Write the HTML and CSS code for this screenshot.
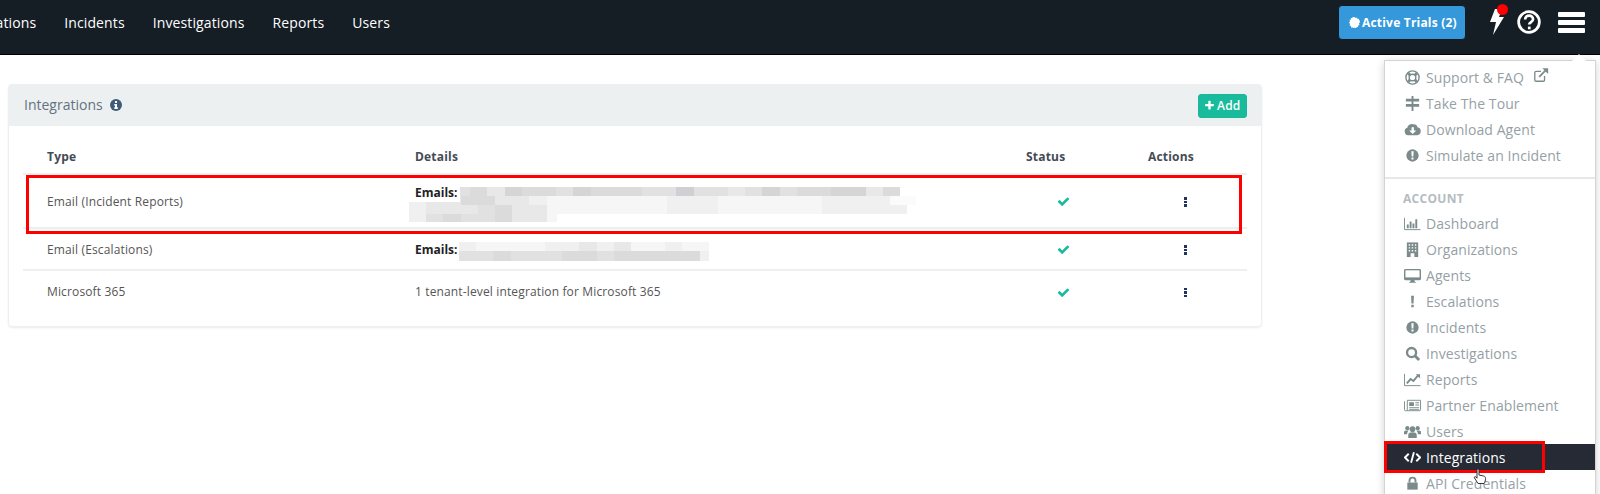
FILE: index.html
```html
<!DOCTYPE html>
<html lang="en">
<head>
<meta charset="utf-8">
<title>Integrations</title>
<link rel="stylesheet" href="styles.css">
</head>
<body>
<header class="navbar">
  <nav class="nav-links">
    <a>Organizations</a><a>Incidents</a><a>Investigations</a><a>Reports</a><a>Users</a>
  </nav>
  <div class="nav-tools">
    <button class="trial-btn">
      <svg class="badge-ic" viewBox="0 0 20 20"><path d="M10 0l2 2 2.600-1.200 1 2.700 2.800-.2-.2 2.800 2.700 1L19 9.700l1 .3-2 2 1.200 2.600-2.700 1 .2 2.800-2.800-.2-1 2.700L10 19.500 8 20 6.400 19 3.600 19l.2-2.700-2.800-1L2 12.600 0 10l2-2L.8 5.400l2.700-1-.2-2.800 2.800.2 1-2.700L10 0z"/></svg>
      Active Trials (2)
    </button>
    <span class="bolt">
      <svg viewBox="0 0 16 28" class="bolt-ic"><path d="M7 1h7l-3 8h5L5 27l3-13H2z"/></svg>
      <i class="dot"></i>
    </span>
    <svg class="help-ic" viewBox="0 0 22 22"><circle cx="11" cy="11" r="9.500"/><path d="M7.500 8.600c0-4.600 7.200-4.600 7.200-.2 0 2.800-3.500 2.600-3.500 5"/><path class="help-dot" d="M10 15.200h2.500v2.500H10z"/></svg>
    <span class="burger"><i></i><i></i><i></i></span>
  </div>
</header>

<main class="page">
  <section class="card">
    <div class="card-head">
      <h2>Integrations
        <svg class="info-ic" viewBox="0 0 12 12"><circle cx="6" cy="6" r="6"/><path class="cut" d="M5 2h2v2H5zM4.300 5h2.700v3.200h.8V10H4.300V8.200H5V6.500h-.7z"/></svg>
      </h2>
      <button class="add-btn"><svg viewBox="0 0 1792 1792"><path d="M1600 736v192q0 40-28 68t-68 28h-416v416q0 40-28 68t-68 28h-192q-40 0-68-28t-28-68v-416h-416q-40 0-68-28t-28-68v-192q0-40 28-68t68-28h416v-416q0-40 28-68t68-28h192q40 0 68 28t28 68v416h416q40 0 68 28t28 68z"/></svg>Add</button>
    </div>
    <div class="card-body">
      <table>
        <colgroup><col class="c1"><col class="c2"><col class="c3"><col class="c4"></colgroup>
        <thead><tr><th>Type</th><th>Details</th><th>Status</th><th>Actions</th></tr></thead>
        <tbody>
          <tr class="tall">
            <td>Email (Incident Reports)</td>
            <td>
              <div class="emails two-line"><b>Emails:</b>
                <div class="blur blur-a">
                  <div class="strip s-a"><i class="g4"></i><i class="g5"></i><i class="g3"></i><i class="g6"></i><i class="g5"></i><i class="g5"></i><i class="g4"></i><i class="g6"></i><i class="g5"></i><i class="g5"></i><i class="g5"></i><i class="g4"></i><i class="g4"></i><i class="g7"></i><i class="g4"></i><i class="g4"></i><i class="g3"></i><i class="g4"></i><i class="g6"></i><i class="g4"></i><i class="g5"></i><i class="g5"></i><i class="g6"></i><i class="g6"></i><i class="g3"></i><i class="g5"></i></div>
                  <div class="strip s-b"><i class="g2"></i><i class="g3"></i><i class="g3"></i><i class="g5"></i><i class="g5"></i><i class="g3"></i><i class="g3"></i><i class="g2"></i><i class="g1"></i><i class="g1"></i><i class="g1"></i><i class="g1"></i><i class="g1"></i><i class="g1"></i><i class="g1"></i><i class="g2"></i><i class="g2"></i><i class="g2"></i><i class="g1"></i><i class="g1"></i><i class="g1"></i><i class="g1"></i><i class="g1"></i><i class="g1"></i><i class="g2"></i><i class="g2"></i><i class="g2"></i><i class="g2"></i><i class="g0"></i><i class="g0"></i></div>
                  <div class="strip s-c"><i class="g2"></i><i class="g3"></i><i class="g3"></i><i class="g3"></i><i class="g4"></i><i class="g5"></i><i class="g3"></i><i class="g3"></i><i class="g1"></i><i class="g1"></i><i class="g1"></i><i class="g1"></i><i class="g1"></i><i class="g1"></i><i class="g1"></i><i class="g2"></i><i class="g2"></i><i class="g2"></i><i class="g1"></i><i class="g1"></i><i class="g1"></i><i class="g1"></i><i class="g1"></i><i class="g1"></i><i class="g2"></i><i class="g2"></i><i class="g2"></i><i class="g2"></i><i class="g2"></i></div>
                  <div class="strip s-d"><i class="g2"></i><i class="g4"></i><i class="g5"></i><i class="g4"></i><i class="g4"></i><i class="g5"></i><i class="g3"></i><i class="g3"></i><i class="g1"></i></div>
                </div>
              </div>
            </td>
            <td class="mid"><svg class="check" viewBox="0 0 1792 1792"><path d="M1671 566q0 40-28 68l-724 724-136 136q-28 28-68 28t-68-28l-136-136-362-362q-28-28-28-68t28-68l136-136q28-28 68-28t68 28l294 295 656-657q28-28 68-28t68 28l136 136q28 28 28 68z"/></svg></td>
            <td class="mid"><span class="kebab"><i></i><i></i><i></i></span></td>
          </tr>
          <tr>
            <td>Email (Escalations)</td>
            <td>
              <div class="emails"><b>Emails:</b>
                <div class="blur blur-b">
                  <div class="strip s-e"><i class="g2"></i><i class="g1"></i><i class="g1"></i><i class="g1"></i><i class="g1"></i><i class="g2"></i><i class="g2"></i><i class="g3"></i><i class="g2"></i><i class="g3"></i><i class="g1"></i><i class="g1"></i><i class="g2"></i><i class="g1"></i><i class="g1"></i></div>
                  <div class="strip s-f"><i class="g4"></i><i class="g4"></i><i class="g5"></i><i class="g4"></i><i class="g4"></i><i class="g4"></i><i class="g5"></i><i class="g5"></i><i class="g4"></i><i class="g5"></i><i class="g5"></i><i class="g5"></i><i class="g5"></i><i class="g5"></i><i class="g2"></i></div>
                </div>
              </div>
            </td>
            <td class="mid"><svg class="check" viewBox="0 0 1792 1792"><path d="M1671 566q0 40-28 68l-724 724-136 136q-28 28-68 28t-68-28l-136-136-362-362q-28-28-28-68t28-68l136-136q28-28 68-28t68 28l294 295 656-657q28-28 68-28t68 28l136 136q28 28 28 68z"/></svg></td>
            <td class="mid"><span class="kebab"><i></i><i></i><i></i></span></td>
          </tr>
          <tr class="last">
            <td>Microsoft 365</td>
            <td>1 tenant-level integration for Microsoft 365</td>
            <td class="mid"><svg class="check" viewBox="0 0 1792 1792"><path d="M1671 566q0 40-28 68l-724 724-136 136q-28 28-68 28t-68-28l-136-136-362-362q-28-28-28-68t28-68l136-136q28-28 68-28t68 28l294 295 656-657q28-28 68-28t68 28l136 136q28 28 28 68z"/></svg></td>
            <td class="mid"><span class="kebab"><i></i><i></i><i></i></span></td>
          </tr>
        </tbody>
      </table>
    </div>
  </section>
</main>

<aside class="menu">
  <span class="menu-caret"></span>
  <ul class="menu-group first">
    <li><svg class="ic" viewBox="0 0 18 18"><circle cx="9" cy="9" r="7" class="st15"/><circle cx="9" cy="9" r="3.500" class="st15"/><path class="st3" d="M4.500 4.500l2 2M13.500 4.500l-2 2M4.500 13.500l2-2M13.500 13.500l-2-2"/></svg>Support &amp; FAQ<svg class="ic ext" viewBox="0 0 18 18"><path class="st15" d="M13 10v4.500a1.500 1.500 0 0 1-1.500 1.500h-8A1.500 1.500 0 0 1 2 14.500v-8A1.500 1.500 0 0 1 3.500 5H9"/><path class="st2" d="M7 11L15 3"/><path d="M10.500 1.500H17V8z"/></svg></li>
    <li><svg class="ic" viewBox="0 0 18 18"><path d="M8 1h2v16H8zM2 4h14v3H2zM2 9.500h14v3H2z"/></svg>Take The Tour</li>
    <li><svg class="ic" viewBox="0 0 18 18"><path d="M4.500 15A4 4 0 0 1 3.500 7.200 4.500 4.500 0 0 1 9.500 3.500a4 4 0 0 1 4.800 3.200A4.200 4.200 0 0 1 14 15z"/><path class="cut" d="M8 6.500h2.500v3.500H13l-3.800 3.800L5.500 10H8z"/></svg>Download Agent</li>
    <li><svg class="ic" viewBox="0 0 18 18"><circle cx="9" cy="9" r="6.500"/><path class="cut" d="M7.800 4.500h2.400l-.3 5.500H8.100zM7.900 11h2.200v2.200H7.900z"/></svg>Simulate an Incident</li>
  </ul>
  <ul class="menu-group">
    <li class="menu-label">ACCOUNT</li>
    <li><svg class="ic" viewBox="0 0 18 18"><path class="st1" d="M.5 3v12.500H17.500"/><path d="M3 10h2v4H3zM6 7h2v7H6zM9 9h2v5H9zM12 4.500h2V14h-2z"/></svg>Dashboard</li>
    <li><svg class="ic" viewBox="0 0 18 18"><path d="M3 1.500h12V17H3z"/><path class="cut" d="M5 3.500h1.500V5H5zM8.200 3.500h1.500V5H8.200zM11.500 3.500H13V5h-1.500zM5 6.500h1.500V8H5zM8.200 6.500h1.500V8H8.200zM11.500 6.500H13V8h-1.500zM5 9.500h1.500V11H5zM8.200 9.500h1.500V11H8.200zM11.500 9.500H13V11h-1.500zM7 13h4v4H7z"/></svg>Organizations</li>
    <li><svg class="ic" viewBox="0 0 18 18"><path d="M1.500 2h15A1.500 1.500 0 0 1 18 3.500v9a1.500 1.500 0 0 1-1.500 1.500H11l.5 1.800h1v1h-7v-1h1L7 14H1.500A1.500 1.500 0 0 1 0 12.500v-9A1.500 1.500 0 0 1 1.500 2z"/><path class="cut" d="M1.500 3.500h15V11h-15z"/></svg>Agents</li>
    <li><svg class="ic" viewBox="0 0 18 18"><path d="M7.500 3h3l-.4 8H7.900zM7.700 12.500h2.600V15H7.700z"/></svg>Escalations</li>
    <li><svg class="ic" viewBox="0 0 18 18"><circle cx="9" cy="9" r="6.500"/><path class="cut" d="M7.800 4.500h2.400l-.3 5.500H8.100zM7.900 11h2.200v2.200H7.900z"/></svg>Incidents</li>
    <li><svg class="ic" viewBox="0 0 18 18"><circle cx="8" cy="8" r="4.800" class="st25"/><path class="st3" d="M11.500 11.500l4.500 4.500"/></svg>Investigations</li>
    <li><svg class="ic" viewBox="0 0 18 18"><path class="st1" d="M.5 3v12.500H17.500"/><path class="st2" d="M3 13l4-4.500 3 2 5-6"/><path d="M12.500 3.500H17V8z"/></svg>Reports</li>
    <li><svg class="ic" viewBox="0 0 18 18"><path class="st1" d="M.5 4.500v9a1 1 0 0 0 1 1h15a1 1 0 0 0 1-1v-10h-14V14"/><path d="M5.500 5.500h5v4h-5zM12 5.500h4v1h-4zM12 8h4v1h-4zM5.500 10.500H16v1H5.500zM5.500 12.500H16v1H5.500z"/></svg>Partner Enablement</li>
    <li><svg class="ic" viewBox="0 0 18 18"><circle cx="9" cy="6.500" r="3"/><circle cx="3.500" cy="5.500" r="2.200"/><circle cx="14.500" cy="5.500" r="2.200"/><path d="M4.500 16v-3.500c0-2 2-2.800 4.500-2.800s4.500.8 4.500 2.800V16zM0 12V9.500C0 8.500 1.500 8 3.500 8c.6 0 1 .1 1.500.3-1 .7-1.600 1.700-1.700 3.700zM18 12V9.500C18 8.500 16.500 8 14.500 8c-.6 0-1 .1-1.500.3 1 .7 1.600 1.700 1.700 3.700z"/></svg>Users</li>
    <li class="active"><svg class="ic" viewBox="0 0 18 18"><path class="st2" d="M5 5l-4 4 4 4M13 5l4 4-4 4M10.500 3.500l-3 11"/></svg>Integrations</li>
    <li><svg class="ic" viewBox="0 0 18 18"><path class="st2" d="M5.800 8V6a3.200 3.200 0 0 1 6.400 0v2"/><path d="M3.500 8h11v7.500h-11z"/></svg>API Credentials</li>
  </ul>
</aside>

<div class="mark mark-row"></div>
<div class="mark mark-item"></div>
<svg class="cursor" viewBox="0 0 14 17"><path d="M4 1.500c1-.8 2 0 2 1V7l4.500 1c1.500.4 2 1 2 2.500 0 2-.5 3.500-1.500 5H5L1.500 10c-.6-1 .7-2 1.500-1l1 1.200z"/></svg>
</body>
</html>
```
FILE: styles.css
```css
* { box-sizing: border-box; }
html, body { margin: 0; height: 494px; overflow: hidden; }
body { position: relative; background: #fff; font-family: "Open Sans", sans-serif; font-size: 12px; color: #555; }

/* navbar */
.navbar { display: flex; align-items: center; justify-content: space-between; height: 55px; background: #151d25; border-bottom: 1px solid #000; color: #fff; }
.nav-links { display: flex; gap: 28px; margin-left: -56px; font-size: 14px; font-weight: 500; letter-spacing: .12px; margin-top: -10px; }
.nav-tools { display: flex; align-items: center; padding-right: 15px; margin-top: -10px; }
.trial-btn { display: flex; align-items: center; gap: 2px; width: 128px; height: 35px; padding: 0 0 0 10px; background: #3498db; border: 1px solid #0e1a24; border-radius: 4px; color: #fff; font: 700 12px "Open Sans", sans-serif; letter-spacing: .2px; }
.badge-ic { width: 11px; height: 11px; fill: #fff; }
.bolt { position: relative; display: block; width: 17px; height: 28px; margin-left: 22px; }
.bolt-ic { display: block; width: 16px; height: 28px; fill: #fff; }
.dot { position: absolute; top: -4px; left: 9px; width: 11px; height: 11px; border-radius: 50%; background: #f00; }
.help-ic { width: 24px; height: 24px; margin-left: 12px; fill: none; stroke: #fff; stroke-width: 2.500; }
.help-ic .help-dot { fill: #fff; stroke: none; }
.burger { display: flex; flex-direction: column; gap: 3px; width: 27px; margin-left: 17px; }
.burger i { display: block; height: 5px; background: #fff; border-radius: 1px; }

/* card */
.page { padding: 29px 0 0 8px; }
.card { width: 1254px; height: 243px; border: 1px solid #ecf0f1; border-radius: 4px; box-shadow: 0 1px 2px rgba(0,0,0,.08); }
.card-head { display: flex; align-items: center; justify-content: space-between; height: 41px; padding: 0 14px 2px 15px; background: #ecf0f1; }
.card-head h2 { margin: 0; font-size: 14px; font-weight: 400; color: #65727e; display: flex; align-items: center; gap: 7px; }
.info-ic { width: 12px; height: 12px; fill: #3f5d78; }
.cut { fill: #fff; }
.add-btn { display: flex; align-items: center; gap: 2px; width: 49px; height: 24px; margin-top: 2px; padding: 0 0 0 5px; background: #18bc9c; border: 1px solid #1bb598; border-radius: 3px; color: #fff; font: 600 12px "Open Sans", sans-serif; letter-spacing: .2px; }
.add-btn svg { width: 11px; height: 11px; fill: #fff; }
.card-body { padding: 15px 14px 0; }

/* table */
table { width: 1224px; border-collapse: collapse; table-layout: fixed; }
.c1 { width: 368px; } .c2 { width: 611px; } .c3 { width: 122px; } .c4 { width: 123px; }
th { height: 33px; padding: 0 24px 1px; text-align: left; font-size: 12px; font-weight: 700; color: #444b54; letter-spacing: .2px; border-bottom: 2px solid #ecf0f1; }
td { height: 42px; padding: 0 24px; border-bottom: 2px solid #ecf0f1; vertical-align: middle; line-height: 18px; letter-spacing: .14px; }
tr:not(.last) td:not(.mid) { padding-top: 2px; }
tr.tall td { height: 54px; }
tr.last td { border-bottom: 0; }
td.mid { padding: 0; text-align: center; }
.check { display: inline-block; width: 13px; height: 13px; fill: #18bc9c; vertical-align: middle; }
.kebab { display: inline-flex; flex-direction: column; gap: 1px; vertical-align: middle; }
.kebab i { display: block; width: 3px; height: 2.500px; background: #22325f; }

/* blurred addresses */
.emails { position: relative; height: 18px; white-space: nowrap; }
.emails.two-line { height: 36px; }
.emails b { position: relative; z-index: 1; display: inline-block; margin-left: -6px; padding: 0 3px 0 6px; background: #fff; color: #222; font-weight: 700; letter-spacing: 0; }
.blur { position: absolute; }
.blur-a { left: -6px; top: 3px; }
.blur-b { left: 44px; top: 1px; width: 250px; overflow: hidden; z-index: 2; }
.strip { display: flex; }
.strip i { display: block; flex: 0 0 17.200px; height: 100%; }
.s-a { height: 9px; margin-left: 44px; }
.s-b { height: 9px; width: 507px; overflow: hidden; }
.s-c { height: 9px; }
.s-d { height: 8px; width: 148px; overflow: hidden; }
.s-e { height: 9px; }
.s-f { height: 10px; }
.g0 { background: #fbfbfb; } .g1 { background: #f6f6f6; } .g2 { background: #f0f0f0; } .g3 { background: #e8e8e8; }
.g4 { background: #e1e1e1; } .g5 { background: #dbdbdb; } .g6 { background: #d5d5d5; } .g7 { background: #cfcfd4; }

/* dropdown */
.menu { position: absolute; top: 60px; left: 1384px; width: 212px; height: 440px; background: #fff; border: 1px solid #d4d4d4; box-shadow: 0 2px 8px rgba(0,0,0,.18); font-size: 14px; color: #959fa5; letter-spacing: .08px; }
.menu-caret { position: absolute; top: -7px; left: 187px; width: 0; height: 0; border: 7px solid transparent; border-top: 0; border-bottom-color: #fff; }
.menu-group { margin: 0; padding: 7px 0 0; list-style: none; }
.menu-group.first { padding: 3px 0 9px; border-bottom: 2px solid #e7e7e7; }
.menu-group li { display: flex; align-items: center; height: 26px; padding-left: 19px; }
.menu-group li.menu-label { height: 24px; padding-left: 18px; font-size: 12px; font-weight: 700; color: #b4bcc2; letter-spacing: .3px; }
.menu-group li.active { background: #262a35; color: #fff; }
.ic { flex: 0 0 17px; width: 17px; height: 17px; margin-right: 5px; fill: #7b8a8b; }
.ic.ext { flex-basis: 16px; width: 16px; height: 16px; margin: -4px 0 0 9px; }
.st1, .st15, .st2, .st25, .st3 { fill: none; stroke: #7b8a8b; }
.st1 { stroke-width: 1; }
.st15 { stroke-width: 1.500; }
.st2 { stroke-width: 2; }
.st25 { stroke-width: 2.500; }
.st3 { stroke-width: 3; }
.active .st2 { stroke: #fff; }

/* annotations */
.mark { position: absolute; border: 3px solid #f00; }
.mark-row { top: 175px; left: 26px; width: 1216px; height: 59px; }
.mark-item { top: 441px; left: 1384px; width: 161px; height: 32px; }
.cursor { position: absolute; top: 468px; left: 1473px; width: 14px; height: 17px; fill: #fff; stroke: #333; stroke-width: 1; }
```
